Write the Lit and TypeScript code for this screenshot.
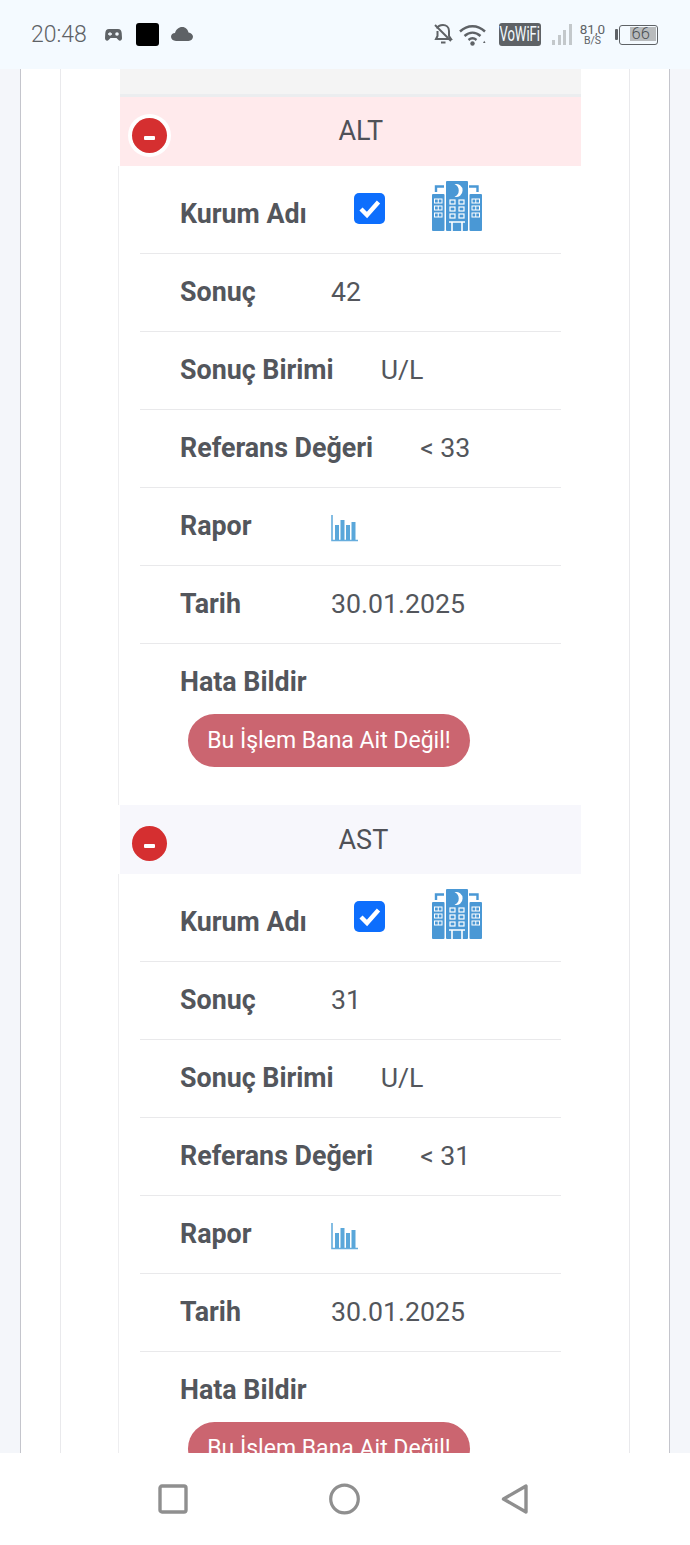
import { LitElement, html, css, svg } from "lit";
import { customElement } from "lit/decorators.js";

const hospitalIcon = html`<svg class="hospital" viewBox="0 0 51 51">
  <path d="M5 12V6.5h8M38 6.5h8.5V12" fill="none" stroke="#4a98d5" stroke-width="2.4" />
  <rect x="1" y="14" width="12.5" height="37" rx="1" fill="#4a98d5" />
  <rect x="38.5" y="14" width="12.5" height="37" rx="1" fill="#4a98d5" />
  <rect x="15" y="1" width="22" height="50" rx="1" fill="#4a98d5" />
  <path d="M23.5 4.2a6.5 6.5 0 1 1 0 12.6a6.8 6.8 0 0 0 0-12.6z" fill="#fff" />
  ${[20, 27, 34].map(
    (y) => svg`
    <rect x="19" y="${y}" width="5" height="4" fill="none" stroke="#fff" stroke-width="1.2" />
    <rect x="28" y="${y}" width="5" height="4" fill="none" stroke="#fff" stroke-width="1.2" />
    <rect x="3.5" y="${y - 1}" width="7.5" height="4" fill="none" stroke="#fff" stroke-width="1" />
    <path d="M7.25 ${y - 1}v4" stroke="#fff" stroke-width="1" />
    <rect x="41" y="${y - 1}" width="7.5" height="4" fill="none" stroke="#fff" stroke-width="1" />
    <path d="M44.75 ${y - 1}v4" stroke="#fff" stroke-width="1" />`
  )}
  <path d="M18 42h16M21 42v9M31 42v9" fill="none" stroke="#fff" stroke-width="1.6" />
</svg>`;

const chartIcon = html`<svg class="chart" viewBox="0 0 27 27">
  <path d="M1 0v25.5h26" fill="none" stroke="#66addd" stroke-width="1.6" />
  <rect x="4" y="10" width="4" height="15" fill="#5aa7da" />
  <rect x="9.5" y="5" width="4" height="20" fill="#5aa7da" />
  <rect x="15" y="10" width="4" height="15" fill="#5aa7da" />
  <rect x="20.5" y="7" width="4" height="18" fill="#5aa7da" />
</svg>`;

const checkIcon = html`<span class="check">
  <svg viewBox="0 0 31 31">
    <path d="M7 16l6 6L24.5 9" fill="none" stroke="#fff" stroke-width="4.4" />
  </svg>
</span>`;

const tests = [
  { name: "ALT", result: "42", unit: "U/L", ref: "< 33", alert: true },
  { name: "AST", result: "31", unit: "U/L", ref: "< 31", alert: false },
];

@customElement("app-root")
export class AppRoot extends LitElement {
  static styles = css`
    :host {
      display: block;
      height: 1545px;
      font-family: Roboto, "Liberation Sans", sans-serif;
      color: #53565c;
    }
    * {
      box-sizing: border-box;
    }
    .screen {
      display: flex;
      flex-direction: column;
      height: 1545px;
      overflow: hidden;
      background: #f4f6fa;
    }

    /* status bar */
    .status {
      flex: 0 0 69px;
      display: flex;
      align-items: center;
      padding: 0 32px 0 31px;
      background: #f4faff;
      color: #5e6266;
    }
    .time {
      font-size: 23px;
      font-weight: 300;
      margin-right: 18px;
    }
    .game {
      width: 17px;
      height: 12px;
      margin-right: 14px;
    }
    .black {
      width: 23px;
      height: 23px;
      border-radius: 3px;
      background: #000;
      margin-right: 12px;
    }
    .cloud {
      width: 22px;
      height: 14px;
      margin-top: -2px;
    }
    .spacer {
      flex: 1;
    }
    .bell {
      width: 20px;
      height: 23px;
      margin-right: 6px;
    }
    .wifi {
      width: 28px;
      height: 22px;
      margin-right: 12px;
    }
    .vowifi {
      width: 42px;
      height: 23px;
      border-radius: 3px;
      background: #5e6266;
      color: #f4faff;
      font-size: 21px;
      line-height: 23px;
      margin-right: 11px;
      overflow: hidden;
      display: flex;
      justify-content: center;
    }
    .vowifi span {
      display: block;
      transform: scaleX(0.62);
    }
    .signal {
      width: 20px;
      height: 21px;
      margin-right: 7px;
    }
    .speed {
      width: 27px;
      text-align: center;
      font-size: 13.5px;
      line-height: 11px;
      margin-right: 9px;
    }
    .speed small {
      display: block;
      font-size: 10.5px;
    }
    .battery {
      display: flex;
      align-items: center;
    }
    .nub {
      width: 3px;
      height: 11px;
      background: #5e6266;
      border-radius: 1px;
      margin-right: 1px;
    }
    .cell {
      width: 39px;
      height: 20px;
      border: 1.5px solid #5e6266;
      border-radius: 3px;
      padding: 1.5px;
    }
    .fill {
      display: block;
      margin-left: 8px;
      height: 14px;
      background: #b8bbbd;
      font-size: 16.5px;
      font-weight: 300;
      line-height: 14px;
      padding-left: 2px;
      color: #4b4f53;
    }

    /* page behind */
    .page {
      flex: 1;
      min-height: 0;
      overflow: hidden;
      padding: 0 20px;
    }
    .outer {
      height: 100%;
      background: #fff;
      border-left: 1.5px solid #c4c5cc;
      border-right: 1.5px solid #c4c5cc;
      padding: 0 39px 0 38.5px;
    }
    .inner {
      height: 100%;
      border-left: 1px solid #e9e9ec;
      border-right: 1px solid #e9e9ec;
      padding: 0 48px 0 59px;
    }
    .band {
      height: 28px;
      background: #f4f4f4;
      border-bottom: 3px solid #ebedef;
    }

    /* header of each test */
    .head {
      height: 69px;
      display: flex;
      align-items: center;
      background: #f7f7fc;
      font-size: 27px;
      color: #4f5157;
      padding-left: 12px;
    }
    .head.alert {
      background: #ffeaec;
    }
    .minus {
      width: 35px;
      height: 35px;
      border-radius: 50%;
      background: #d52f30;
      margin: 8px 172px 0 0;
      display: flex;
      align-items: center;
      justify-content: center;
    }
    .alert .minus {
      box-shadow: 0 0 0 4px #fff;
    }
    .head.alert .title {
      margin-top: -1px;
    }
    .minus i {
      display: block;
      width: 11px;
      height: 3.5px;
      border-radius: 1px;
      margin-top: 5px;
      background: #fff;
    }

    /* rows */
    .rows {
      margin-left: -1.5px;
      border-left: 1.5px solid #eeeef0;
      padding: 0 20px 38px 21px;
    }
    .row {
      height: 78px;
      display: flex;
      align-items: center;
      padding-left: 40px;
      padding-bottom: 1px;
      border-bottom: 1.5px solid #e9e9eb;
      font-size: 26.7px;
    }
    .row.first {
      height: 88px;
    }
    .row.last {
      border-bottom: 0;
      height: 70px;
      align-items: flex-start;
      padding-top: 22px;
    }
    .label {
      min-width: 151px;
      padding-right: 47px;
      font-weight: 700;
      font-size: 26.8px;
      white-space: nowrap;
    }
    .first .label {
      margin-top: 9px;
    }
    .check {
      width: 31px;
      height: 31px;
      border-radius: 5px;
      background: #0d6efd;
      margin-top: -2px;
      margin-right: 46px;
    }
    .check svg,
    .hospital,
    .chart {
      display: block;
    }
    .hospital {
      width: 51px;
      height: 51px;
      margin-top: -8px;
    }
    .chart {
      width: 27px;
      height: 27px;
      margin-top: 4px;
    }
    .report {
      display: inline-flex;
      align-items: center;
      justify-content: center;
      width: 282px;
      height: 53px;
      margin-left: 48px;
      border-radius: 27px;
      background: #cb6570;
      color: #fff;
      font-size: 23px;
    }
    .nav {
      flex: 0 0 92px;
      display: flex;
      justify-content: space-between;
      align-items: center;
      background: #fff;
      padding: 0 159px 0 158px;
    }
    .nav svg {
      display: block;
      width: 31px;
      height: 32px;
    }
  `;

  renderTest(t: (typeof tests)[number]) {
    return html`
      <div class="head ${t.alert ? "alert" : ""}">
        <span class="minus"><i></i></span>
        <span class="title">${t.name}</span>
      </div>
      <div class="rows">
        <div class="row first">
          <span class="label">Kurum Adı</span>
          ${checkIcon} ${hospitalIcon}
        </div>
        <div class="row"><span class="label">Sonuç</span>${t.result}</div>
        <div class="row"><span class="label">Sonuç Birimi</span>${t.unit}</div>
        <div class="row"><span class="label">Referans Değeri</span>${t.ref}</div>
        <div class="row"><span class="label">Rapor</span>${chartIcon}</div>
        <div class="row"><span class="label">Tarih</span>30.01.2025</div>
        <div class="row last"><span class="label">Hata Bildir</span></div>
        <div class="report">Bu İşlem Bana Ait Değil!</div>
      </div>
    `;
  }

  renderStatus() {
    return html`
      <div class="status">
        <span class="time">20:48</span>
        <svg class="game" viewBox="0 0 17 12">
          <path
            d="M4 0h9c2.4 0 3.4 1.6 3.7 4l.3 5c.1 2.4-2.2 3.6-3.8 1.8L11.5 9h-6L3.8 10.8C2.2 12.6-.1 11.4 0 9l.3-5C.6 1.6 1.6 0 4 0z"
            fill="#5e6266"
          />
          <path d="M3 5h4M5 3.2v3.6" stroke="#f4faff" stroke-width="1.3" />
          <circle cx="12" cy="5" r="1.8" fill="#f4faff" />
        </svg>
        <span class="black"></span>
        <svg class="cloud" viewBox="0 0 22 14">
          <path
            d="M5 14C2 14 0 12 0 9.8 0 7.6 1.8 6 4 6 5 2.5 7.8 0 11.2 0 14.6 0 17 2.5 17.5 5.5 20 5.8 22 7.5 22 9.8 22 12 20 14 17.5 14z"
            fill="#5e6266"
          />
        </svg>
        <span class="spacer"></span>
        <svg class="bell" viewBox="0 0 20 23">
          <path
            d="M4 5.5C5 3 7 2 10 2s6 2 6 6v5l2 3H3l1.5-3V8M8 19.5h4.5"
            fill="none"
            stroke="#5e6266"
            stroke-width="2"
          />
          <path d="M2 2l16 16" stroke="#5e6266" stroke-width="2" />
        </svg>
        <svg class="wifi" viewBox="0 0 28 22">
          <path
            d="M1 7.5c7.5-7 17.5-7 25 0M5.5 12c5-4.5 11-4.5 16 0M9.5 16c2.8-2.3 5.2-2.3 8 0"
            fill="none"
            stroke="#5e6266"
            stroke-width="2.4"
          />
          <circle cx="13.5" cy="19.5" r="2.2" fill="#5e6266" />
          <path d="M24 19l2.5 0-1.2-2.2z" fill="#5e6266" />
        </svg>
        <span class="vowifi"><span>VoWiFi</span></span>
        <svg class="signal" viewBox="0 0 20 21">
          <rect x="0" y="16" width="3" height="5" fill="#c3c8cb" />
          <rect x="6" y="11" width="3" height="10" fill="#c3c8cb" />
          <rect x="11" y="6" width="3" height="15" fill="#c3c8cb" />
          <rect x="17" y="0" width="3" height="21" fill="#c3c8cb" />
        </svg>
        <span class="speed">81,0<small>B/S</small></span>
        <span class="battery">
          <span class="nub"></span>
          <span class="cell"><span class="fill">66</span></span>
        </span>
      </div>
    `;
  }

  render() {
    return html`
      <div class="screen">
        ${this.renderStatus()}
        <div class="page">
          <div class="outer">
            <div class="inner">
              <div class="band"></div>
              ${tests.map((t) => this.renderTest(t))}
            </div>
          </div>
        </div>
        <div class="nav">
          <svg viewBox="0 0 31 32">
            <rect x="2" y="3" width="26" height="26" rx="2" fill="none" stroke="#8f8f8f" stroke-width="3.4" />
          </svg>
          <svg viewBox="0 0 31 32">
            <circle cx="15.5" cy="16" r="13.8" fill="none" stroke="#8f8f8f" stroke-width="3.2" />
          </svg>
          <svg viewBox="0 0 31 32">
            <path d="M26 3v26L3.5 16z" fill="none" stroke="#8f8f8f" stroke-width="3.4" stroke-linejoin="round" />
          </svg>
        </div>
      </div>
    `;
  }
}
